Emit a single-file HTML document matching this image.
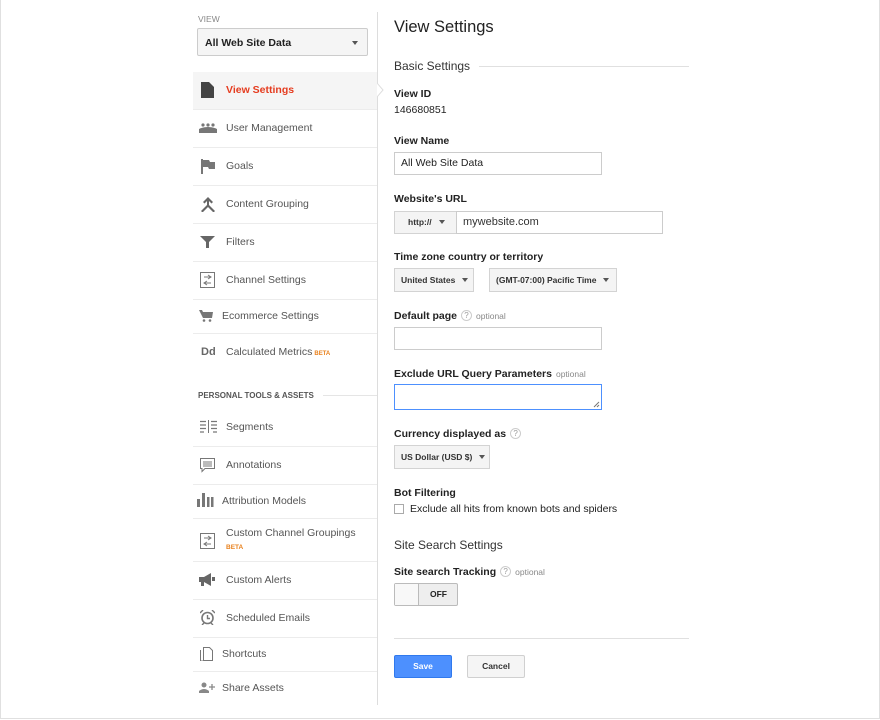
<!DOCTYPE html>
<html><head><style>
*{margin:0;padding:0;box-sizing:border-box}
body{width:880px;height:720px;background:#fff;font-family:"Liberation Sans",Arial,sans-serif;color:#222;position:relative;overflow:hidden}
.frame{position:absolute;left:0;top:0;width:880px;height:719px;border:1px solid #e0e0e0;border-top:none}
.a{position:absolute;white-space:nowrap}
.nav{position:absolute;left:193px;font-size:10.5px;color:#555;white-space:nowrap}
.sep{position:absolute;left:193px;width:184px;height:1px;background:#ececec}
.lbl{font-size:10.5px;font-weight:bold;color:#222}
.opt{font-size:8.5px;color:#888;font-weight:normal;margin-left:4px}
.q{display:inline-block;width:11px;height:11px;border:1px solid #ccc;border-radius:50%;font-size:8px;color:#999;text-align:center;line-height:9px;margin-left:4px;font-weight:normal;vertical-align:1px}
.inp{position:absolute;border:1px solid #ccc;background:#fff;font-size:10.5px;padding-left:6px;white-space:nowrap}
.sel{position:absolute;border:1px solid #d3d3d3;background:#f4f4f4;font-size:8.5px;font-weight:bold;color:#333;padding-left:6px;white-space:nowrap}
.car{display:inline-block;width:0;height:0;border-left:3.5px solid transparent;border-right:3.5px solid transparent;border-top:4px solid #555;margin-left:7px;vertical-align:1px}
</style></head><body>
<div class="frame"></div>
<div class="a" style="left:198px;top:14px;font-size:8.5px;color:#888">VIEW</div>
<div class="a" style="left:197px;top:28px;width:171px;height:28px;border:1px solid #ccc;border-radius:2px;background:#f5f5f5;font-size:10.5px;font-weight:bold;padding:8px 0 0 7px">All Web Site Data<span class="car" style="position:absolute;right:9px;top:12px"></span></div>
<div class="a" style="left:377px;top:12px;width:1px;height:693px;background:#ddd"></div>
<div class="a" style="left:193px;top:72px;width:184px;height:37px;background:#f5f5f5"></div>
<svg class="a" style="left:377px;top:83px" width="7" height="14"><path d="M0 0L6 7 0 14" fill="#fff" stroke="#ddd"/></svg>

<div class="sep" style="top:109px"></div><div class="sep" style="top:147px"></div><div class="sep" style="top:185px"></div><div class="sep" style="top:223px"></div><div class="sep" style="top:261px"></div><div class="sep" style="top:299px"></div><div class="sep" style="top:333px"></div>
<div class="sep" style="top:446px"></div><div class="sep" style="top:484px"></div><div class="sep" style="top:518px"></div><div class="sep" style="top:561px"></div><div class="sep" style="top:599px"></div><div class="sep" style="top:637px"></div><div class="sep" style="top:671px"></div>

<svg class="a" style="left:201px;top:82px" width="13" height="16"><path d="M0 0h8l5 5v11H0z" fill="#444"/></svg>
<div class="nav" style="top:84px;left:226px;color:#e53c1f;font-weight:bold">View Settings</div>
<svg class="a" style="left:199px;top:123px" width="18" height="10"><circle cx="4" cy="2" r="1.6" fill="#777"/><circle cx="9" cy="2" r="1.6" fill="#777"/><circle cx="14" cy="2" r="1.6" fill="#777"/><path d="M0 10v-4q4-2 9-2t9 2v4z" fill="#777"/></svg>
<div class="nav" style="top:122px;left:226px">User Management</div>
<svg class="a" style="left:201px;top:159px" width="15" height="15"><path d="M0 0h2v15H0zM2 1h6l1 2h5v7H8l-1-2H2z" fill="#777"/></svg>
<div class="nav" style="top:160px;left:226px">Goals</div>
<svg class="a" style="left:201px;top:197px" width="14" height="15"><path d="M7 0l5 5-1.5 1.5L8 4v4l6 6-1.5 1.5L7 10 1.5 15.5 0 14l6-6V4L3.5 6.5 2 5z" fill="#666"/></svg>
<div class="nav" style="top:198px;left:226px">Content Grouping</div>
<svg class="a" style="left:200px;top:236px" width="15" height="12"><path d="M0 0h15l-6 6v6H6V6z" fill="#666"/></svg>
<div class="nav" style="top:236px;left:226px">Filters</div>
<svg class="a" style="left:200px;top:272px" width="15" height="16"><rect x=".5" y=".5" width="14" height="15" fill="none" stroke="#777"/><path d="M4 5h7M8 3l3 2-3 2M11 11H4M7 9l-3 2 3 2" fill="none" stroke="#777"/></svg>
<div class="nav" style="top:274px;left:226px">Channel Settings</div>
<svg class="a" style="left:199px;top:310px" width="14" height="12"><path d="M0 0h3l1 2h10l-1 6H4z" fill="#777"/><circle cx="5" cy="10.5" r="1.3" fill="#777"/><circle cx="11" cy="10.5" r="1.3" fill="#777"/></svg>
<div class="nav" style="top:310px;left:222px">Ecommerce Settings</div>
<div class="a" style="left:201px;top:346px;font-size:11px;font-weight:bold;color:#666">Dd</div>
<div class="nav" style="top:346px;left:226px">Calculated Metrics<span style="font-size:6px;color:#e8801c;font-weight:bold;margin-left:2px">BETA</span></div>

<div class="a" style="left:198px;top:391px;font-size:8px;font-weight:bold;color:#555">PERSONAL TOOLS &amp; ASSETS</div>
<div class="a" style="left:323px;top:395px;width:54px;height:1px;background:#e5e5e5"></div>
<svg class="a" style="left:200px;top:420px" width="17" height="13"><path d="M0 1.5h6M0 5h6M0 8.5h6M0 12h4M11 1.5h6M11 5h6M11 8.5h6M13 12h4" stroke="#777" stroke-width="1.3"/><path d="M8.5 0v13" stroke="#777"/></svg>
<div class="nav" style="top:421px;left:226px">Segments</div>
<svg class="a" style="left:200px;top:458px" width="15" height="15"><path d="M.5.5h14v10H5l-3 3v-3H.5z" fill="none" stroke="#777"/><path d="M3 4h9M3 6h9M3 8h9" stroke="#777"/></svg>
<div class="nav" style="top:459px;left:226px">Annotations</div>
<svg class="a" style="left:197px;top:493px" width="17" height="14"><path d="M0 6h3v8H0zM5 0h3v14H5zM10 4h2.5v10H10zM14 4h2.5v10H14z" fill="#777"/></svg>
<div class="nav" style="top:495px;left:222px">Attribution Models</div>
<svg class="a" style="left:200px;top:533px" width="15" height="16"><rect x=".5" y=".5" width="14" height="15" fill="none" stroke="#777"/><path d="M4 5h7M8 3l3 2-3 2M11 11H4M7 9l-3 2 3 2" fill="none" stroke="#777"/></svg>
<div class="nav" style="top:527px;left:226px">Custom Channel Groupings</div>
<div class="a" style="left:226px;top:544px;font-size:6.5px;font-weight:bold;color:#e8801c">BETA</div>
<svg class="a" style="left:199px;top:573px" width="16" height="14"><path d="M0 4h5l7-4v13L5 9v4H2V9H0z" fill="#666"/><path d="M13 4h3v4h-3z" fill="#666"/></svg>
<div class="nav" style="top:574px;left:226px">Custom Alerts</div>
<svg class="a" style="left:200px;top:610px" width="15" height="15"><circle cx="7.5" cy="8" r="5.5" fill="none" stroke="#777" stroke-width="1.6"/><path d="M7.5 5v3.5h2.5M0 3l3-3M15 3l-3-3M2 15l2-2M13 15l-2-2" stroke="#777" stroke-width="1.4" fill="none"/></svg>
<div class="nav" style="top:612px;left:226px">Scheduled Emails</div>
<svg class="a" style="left:200px;top:647px" width="13" height="14"><path d="M3.5.5h6l3 3v10h-9zM.5 3v11h9" fill="none" stroke="#777"/></svg>
<div class="nav" style="top:648px;left:222px">Shortcuts</div>
<svg class="a" style="left:199px;top:682px" width="16" height="11"><circle cx="5" cy="3" r="2.5" fill="#888"/><path d="M0 11v-2q5-4 10 0v2z" fill="#888"/><path d="M13 2v6M10 5h6" stroke="#888" stroke-width="1.3"/></svg>
<div class="nav" style="top:682px;left:222px">Share Assets</div>

<!-- main -->
<div class="a" style="left:394px;top:18px;font-size:16.5px;color:#222">View Settings</div>
<div class="a" style="left:394px;top:59px;font-size:12px;color:#333">Basic Settings</div>
<div class="a" style="left:479px;top:66px;width:210px;height:1px;background:#e0e0e0"></div>
<div class="a lbl" style="left:394px;top:88px">View ID</div>
<div class="a" style="left:394px;top:104px;font-size:10.5px">146680851</div>
<div class="a lbl" style="left:394px;top:135px">View Name</div>
<div class="inp" style="left:394px;top:152px;width:208px;height:23px;line-height:21px">All Web Site Data</div>
<div class="a lbl" style="left:394px;top:193px">Website's URL</div>
<div class="sel" style="left:394px;top:211px;width:63px;height:23px;line-height:21px;padding-left:13px">http://<span class="car"></span></div>
<div class="inp" style="left:456px;top:211px;width:207px;height:23px;line-height:21px;font-size:11px;color:#333">mywebsite.com</div>
<div class="a lbl" style="left:394px;top:251px">Time zone country or territory</div>
<div class="sel" style="left:394px;top:268px;width:80px;height:24px;line-height:22px">United States<span class="car"></span></div>
<div class="sel" style="left:489px;top:268px;width:128px;height:24px;line-height:22px">(GMT-07:00) Pacific Time<span class="car"></span></div>
<div class="a lbl" style="left:394px;top:310px">Default page<span class="q">?</span><span class="opt">optional</span></div>
<div class="inp" style="left:394px;top:327px;width:208px;height:23px"></div>
<div class="a lbl" style="left:394px;top:368px">Exclude URL Query Parameters<span class="opt">optional</span></div>
<div class="inp" style="left:394px;top:384px;width:208px;height:26px;border-color:#4d90fe"><svg style="position:absolute;right:1px;bottom:1px" width="7" height="7"><path d="M6 1L1 6M6 4L4 6" stroke="#777"/></svg></div>
<div class="a lbl" style="left:394px;top:428px">Currency displayed as<span class="q">?</span></div>
<div class="sel" style="left:394px;top:445px;width:96px;height:24px;line-height:22px">US Dollar (USD $)<span class="car"></span></div>
<div class="a lbl" style="left:394px;top:487px">Bot Filtering</div>
<div class="a" style="left:394px;top:504px;width:10px;height:10px;border:1px solid #aaa;background:#fff"></div>
<div class="a" style="left:410px;top:503px;font-size:10.5px">Exclude all hits from known bots and spiders</div>
<div class="a" style="left:394px;top:538px;font-size:12px;color:#333">Site Search Settings</div>
<div class="a lbl" style="left:394px;top:566px">Site search Tracking<span class="q">?</span><span class="opt">optional</span></div>
<div class="a" style="left:394px;top:583px;width:64px;height:23px;border:1px solid #bbb;border-radius:2px;background:#eee"></div>
<div class="a" style="left:395px;top:584px;width:24px;height:21px;background:#f8f8f8;border-right:1px solid #bbb"></div>
<div class="a" style="left:430px;top:589px;font-size:8.5px;font-weight:bold">OFF</div>
<div class="a" style="left:394px;top:638px;width:295px;height:1px;background:#e0e0e0"></div>
<div class="a" style="left:394px;top:655px;width:58px;height:23px;background:#4d90fe;border:1px solid #3079ed;border-radius:2px;color:#fff;font-size:8.5px;font-weight:bold;text-align:center;line-height:21px">Save</div>
<div class="a" style="left:467px;top:655px;width:58px;height:23px;background:#f5f5f5;border:1px solid #d0d0d0;border-radius:2px;color:#333;font-size:8.5px;font-weight:bold;text-align:center;line-height:21px">Cancel</div>
</body></html>
